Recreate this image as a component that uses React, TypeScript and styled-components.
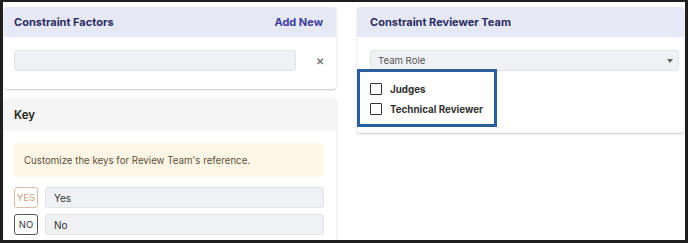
import { createGlobalStyle, styled } from "styled-components";

const GlobalStyle = createGlobalStyle`
  html, body {
    margin: 0;
    padding: 0;
    background: #ffffff;
  }
  body {
    font-family: Inter, "Noto Sans", sans-serif;
  }
  * {
    box-sizing: border-box;
  }
`;

export default function App() {
  return (
    <>
      <GlobalStyle />
      <Frame>
        <Column>
          <Card>
            <CardHeader>
              <CardTitle>Constraint Factors</CardTitle>
              <AddNew>Add New</AddNew>
            </CardHeader>
            <FactorBody>
              <FieldInput />
              <RemoveButton>✕</RemoveButton>
            </FactorBody>
          </Card>

          <Card>
            <KeyHeader>Key</KeyHeader>
            <KeyBody>
              <Notice>Customize the keys for Review Team's reference.</Notice>
              <KeyRow>
                <KeyBadge $tone="yes">YES</KeyBadge>
                <KeyInput>Yes</KeyInput>
              </KeyRow>
              <KeyRow>
                <KeyBadge $tone="no">NO</KeyBadge>
                <KeyInput>No</KeyInput>
              </KeyRow>
            </KeyBody>
          </Card>
        </Column>

        <Column>
          <ReviewerCard>
            <CardHeader>
              <CardTitle>Constraint Reviewer Team</CardTitle>
            </CardHeader>
            <ReviewerBody>
              <Select>
                Team Role
                <Caret />
              </Select>
              <CheckList>
                <CheckRow>
                  <CheckBox />
                  <CheckLabel>Judges</CheckLabel>
                </CheckRow>
                <CheckRow>
                  <CheckBox />
                  <CheckLabel>Technical Reviewer</CheckLabel>
                </CheckRow>
              </CheckList>
            </ReviewerBody>
            <Highlight />
          </ReviewerCard>
        </Column>
      </Frame>
    </>
  );
}

const Frame = styled.main`
  width: 688px;
  height: 243px;
  overflow: hidden;
  border: solid #1e1e1e;
  border-width: 2px 3px 3px 3px;
  padding: 5px 1px 0 1px;
  display: grid;
  grid-template-columns: 332px 327px;
  column-gap: 21px;
  align-items: start;
`;

const Column = styled.section`
  display: flex;
  flex-direction: column;
  gap: 9px;
`;

const Card = styled.div`
  background: #ffffff;
  border-radius: 3px;
  box-shadow: 0 1px 2px rgba(0, 0, 0, 0.22);
`;

const ReviewerCard = styled(Card)`
  position: relative;
`;

const CardHeader = styled.header`
  height: 30px;
  display: flex;
  align-items: center;
  justify-content: space-between;
  padding: 0 13px 0 10px;
  background: #e7e8f6;
  border-radius: 3px 3px 0 0;

  ${ReviewerCard} & {
    padding-left: 13px;
  }
`;

const CardTitle = styled.h2`
  margin: 0;
  font-size: 11px;
  font-weight: 700;
  color: #2b2c63;
`;

const AddNew = styled.span`
  font-size: 11px;
  font-weight: 700;
  color: #3e3e9c;
`;

const FactorBody = styled.div`
  display: flex;
  align-items: center;
  padding: 13px 0 18px 10px;
`;

const FieldInput = styled.div`
  width: 282px;
  height: 21px;
  background: #f0f1f4;
  border: 1px solid #e1e2e6;
  border-radius: 3px;
`;

const RemoveButton = styled.span`
  margin-left: 20px;
  font-size: 10px;
  font-weight: 700;
  color: #777777;
`;

const KeyHeader = styled.header`
  height: 33px;
  display: flex;
  align-items: center;
  padding: 1px 10px 0;
  background: #f5f5f5;
  font-size: 11.5px;
  font-weight: 600;
  color: #222222;
`;

const KeyBody = styled.div`
  display: flex;
  flex-direction: column;
  gap: 6px;
  padding: 12px 12px 10px 10px;
`;

const Notice = styled.p`
  margin: 0 0 4px;
  height: 34px;
  display: flex;
  align-items: center;
  padding: 0 10px;
  background: #fdf5e6;
  border-radius: 3px;
  font-size: 9.7px;
  color: #5e5138;
`;

const KeyRow = styled.div`
  display: flex;
  gap: 7px;
`;

const KeyBadge = styled.span<{ $tone: "yes" | "no" }>`
  width: 24px;
  height: 21px;
  display: flex;
  align-items: center;
  justify-content: center;
  border-radius: 3px;
  font-size: 9.5px;
  border: 1px solid ${({ $tone }) => ($tone === "yes" ? "#d8bca4" : "#555555")};
  color: ${({ $tone }) => ($tone === "yes" ? "#c9a184" : "#333333")};
`;

const KeyInput = styled.div`
  flex: 1;
  height: 21px;
  display: flex;
  align-items: center;
  padding: 0 8px;
  background: #f0f1f4;
  border: 1px solid #e1e2e6;
  border-radius: 3px;
  font-size: 10px;
  color: #333333;
`;

const ReviewerBody = styled.div`
  padding: 13px 5px 18px 13px;
`;

const Select = styled.div`
  height: 21px;
  display: flex;
  align-items: center;
  justify-content: space-between;
  padding: 0 5px 0 7px;
  background: #f0f1f4;
  border: 1px solid #e1e2e6;
  border-radius: 3px;
  font-size: 9.6px;
  color: #555555;
`;

const Caret = styled.span`
  width: 0;
  height: 0;
  border-left: 3px solid transparent;
  border-right: 3px solid transparent;
  border-top: 4px solid #666666;
`;

const CheckList = styled.div`
  display: flex;
  flex-direction: column;
  gap: 8px;
  padding-top: 12px;
`;

const CheckRow = styled.label`
  display: flex;
  align-items: center;
  gap: 8px;
`;

const CheckBox = styled.span`
  width: 12px;
  height: 12px;
  border: 1px solid #333333;
  border-radius: 1px;
  background: #ffffff;
`;

const CheckLabel = styled.span`
  font-size: 9.8px;
  font-weight: 700;
  color: #333333;
`;

const Highlight = styled.div`
  position: absolute;
  left: 0;
  top: 62px;
  width: 140px;
  height: 58px;
  border: 3px solid #2a5f9c;
  pointer-events: none;
`;
